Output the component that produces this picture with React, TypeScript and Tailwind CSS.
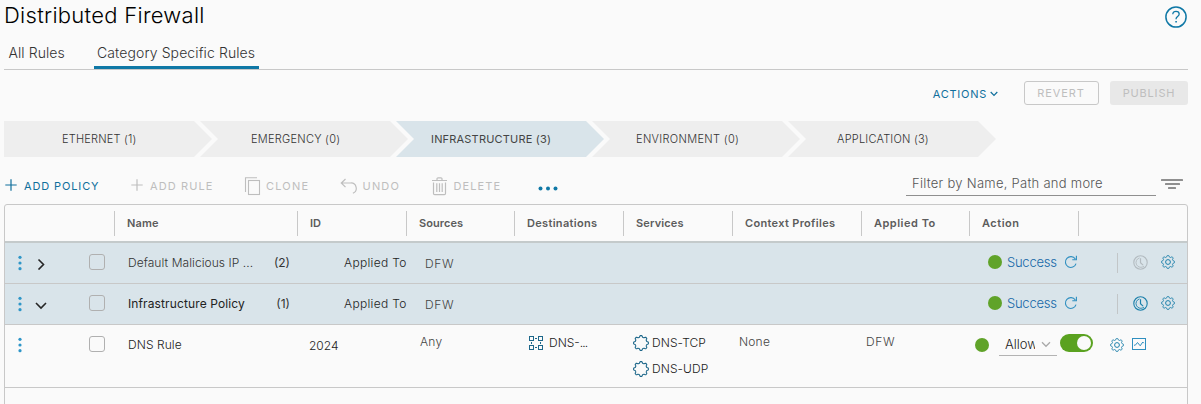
import type { ReactNode } from 'react';

const steps = [
  { label: 'ETHERNET (1)', spacing: 'tracking-[0.2px]', pad: 'pl-[58px]' },
  { label: 'EMERGENCY (0)', spacing: 'tracking-[0.26px]', pad: 'pl-[51px]' },
  { label: 'INFRASTRUCTURE (3)', spacing: 'tracking-[0.19px]', pad: 'pl-[35px]', active: true },
  { label: 'ENVIRONMENT (0)', spacing: 'tracking-[0.33px]', pad: 'pl-[44px]' },
  { label: 'APPLICATION (3)', spacing: 'tracking-[0.22px]', pad: 'pl-[49px]' },
];

const columns = [
  { label: 'Name', width: 'w-[183px]', spacing: 'tracking-[0.14px]' },
  { label: 'ID', width: 'w-[109px]', spacing: '' },
  { label: 'Sources', width: 'w-[108px]', spacing: 'tracking-[0.06px]' },
  { label: 'Destinations', width: 'w-[109px]', spacing: 'tracking-[0.32px]' },
  { label: 'Services', width: 'w-[109px]', spacing: 'tracking-[0.15px]' },
  { label: 'Context Profiles', width: 'w-[129px]', spacing: 'tracking-[0.32px]' },
  { label: 'Applied To', width: 'w-[108px]', spacing: 'tracking-[0.5px]' },
  { label: 'Action', width: 'w-[109px]', spacing: 'tracking-[0.5px]' },
  { label: '', width: 'w-[108px]', spacing: '' },
];

function cogPath(center: number, mid: number, amp: number) {
  const points: string[] = [];
  for (let i = 0; i < 128; i++) {
    const a = (i / 128) * Math.PI * 2;
    const r = mid + amp * Math.max(-1, Math.min(1, 1.8 * Math.cos(8 * a)));
    points.push(`${(center + r * Math.sin(a)).toFixed(2)} ${(center - r * Math.cos(a)).toFixed(2)}`);
  }
  return `M${points.join('L')}Z`;
}

const gearPath = cogPath(7, 5.85, 0.7);
const servicePath = cogPath(8, 6.65, 0.75);

function Plus() {
  return (
    <svg width="12" height="12" viewBox="0 0 12 12" stroke="currentColor" strokeWidth="1.2" className="mb-0.5">
      <path d="M6 .3v11.4M.3 6h11.4" />
    </svg>
  );
}

function CloneIcon() {
  return (
    <svg width="17" height="19" viewBox="0 0 17 19" fill="none" stroke="currentColor" strokeWidth="1.1">
      <rect x="4.5" y="3.5" width="11" height="14" />
      <path d="M1.5 15V.8H13" />
    </svg>
  );
}

function UndoIcon() {
  return (
    <svg width="17" height="17" viewBox="0 0 17 17" fill="none" stroke="currentColor" strokeWidth="1.2">
      <path d="M5.5 1 1.3 5l4.2 4.2M1.3 5h9.2a5.3 5.3 0 0 1 2.4 10.2" />
    </svg>
  );
}

function TrashIcon() {
  return (
    <svg width="17" height="19" viewBox="0 0 17 19" fill="none" stroke="currentColor" strokeWidth="1.2">
      <path d="M1 3.5h15M6 3V1.8A1 1 0 0 1 7 .8h3a1 1 0 0 1 1 1V3M2.5 5.5v11a1.2 1.2 0 0 0 1.2 1.2h9.6a1.2 1.2 0 0 0 1.2-1.2v-11M5.8 6.2V15M8.5 6.2V15M11.2 6.2V15" />
    </svg>
  );
}

function Kebab() {
  return (
    <svg width="4" height="16" viewBox="0 0 4 16" fill="#2f96c8">
      <circle cx="2" cy="2.3" r="1.6" />
      <circle cx="2" cy="8" r="1.6" />
      <circle cx="2" cy="13.7" r="1.6" />
    </svg>
  );
}

function Gear() {
  return (
    <svg width="14" height="14" viewBox="0 0 14 14" fill="none" stroke="#1c80ab" strokeWidth="1">
      <path strokeLinejoin="round" d={gearPath} />
      <circle cx="7" cy="7" r="2.4" />
    </svg>
  );
}

function Clock({ className }: { className: string }) {
  return (
    <svg width="15" height="15" viewBox="0 0 15 15" fill="none" stroke="currentColor" className={className}>
      <circle cx="7.5" cy="7.5" r="6.7" strokeWidth="1.1" />
      <path strokeWidth=".9" d="M6.5 2.900a4.800 4.800 0 1 0 4.500 8.200" />
      <path strokeWidth="1.2" d="M7.5 3.300v4.500l2.600 2.300" />
    </svg>
  );
}

function Refresh() {
  return (
    <svg width="14" height="14" viewBox="0 0 14 14" fill="none" stroke="#2f8fc0" strokeWidth="1.1">
      <path d="M12 8.6A5.4 5.4 0 1 1 11.3 4M12.4.8v3.9H8.3" />
    </svg>
  );
}

function ServiceIcon() {
  return (
    <svg width="16" height="16" viewBox="0 0 16 16" fill="none" stroke="#1d678a" strokeWidth="1.1">
      <path strokeLinejoin="round" d={servicePath} />
    </svg>
  );
}

function GroupIcon() {
  return (
    <svg width="14" height="14" viewBox="0 0 14 14" fill="none" stroke="#1d678a" strokeWidth="1">
      <rect x=".5" y=".5" width="4" height="4" />
      <rect x="9.5" y=".5" width="4" height="4" />
      <rect x=".5" y="9.5" width="4" height="4" />
      <rect x="9.5" y="9.5" width="4" height="4" />
      <path d="M6 2.500h2M6 11.500h2M2.500 6v2M11.500 6v2" />
    </svg>
  );
}

function Checkbox() {
  return <div className="size-4 rounded-[3px] border border-[#b0b0b0]" />;
}

function Tool({ icon, label, width, text, color = 'text-[#bebebe]' }: { icon: ReactNode; label: string; width: string; text: string; color?: string }) {
  return (
    <button className={`flex items-center ${width} ${color}`}>
      <span className="flex w-5 shrink-0 justify-start">{icon}</span>
      <span className={`whitespace-nowrap text-[11px] leading-4 ${text}`}>{label}</span>
    </button>
  );
}

function PolicyRow({ name, count, open = false, nameClass }: { name: string; count: string; open?: boolean; nameClass: string }) {
  return (
    <div className="flex h-[41px] items-center border-b border-[#c8c8c8] bg-[#d9e4ea] text-[12px] leading-4">
      <div className="flex w-[123px] items-center pl-[13px]">
        <Kebab />
        <svg width="12" height="12" viewBox="0 0 12 12" fill="none" stroke="#262626" strokeWidth="1.6" className="ml-[13px] mt-[1px]">
          <path d={open ? 'M1 4 6 9l5-5' : 'M3.500 1.500l5 5-5 5'} />
        </svg>
        <div className="mb-0.5 ml-[42px]"><Checkbox /></div>
      </div>
      <div className={`w-[131px] whitespace-nowrap ${nameClass}`}>{name}</div>
      <div className="w-[31px] text-right text-[#333]">{count}</div>
      <div className="ml-[54px] w-[81px] whitespace-nowrap font-light tracking-[0.32px] text-[#222]">Applied To</div>
      <div className="mt-0.5 w-[563px] font-light tracking-[0.7px] text-[#444]">DFW</div>
      <div className="mb-[2px] flex items-center">
        <span className="size-3.5 rounded-full bg-[#60a329]" />
        <span className="ml-[5px] w-[53px] text-[13px] font-light tracking-[-0.25px] text-[#1668a8]">Success</span>
        <span className="ml-[4px]"><Refresh /></span>
      </div>
      <div className="ml-[39px] h-5 w-px bg-[#c2c6c8]" />
      <div className="mb-[2px] ml-[15px] flex items-center">
        <Clock className={open ? 'text-[#1c80ab]' : 'text-[#b3bbc0]'} />
        <span className="ml-[13px]"><Gear /></span>
      </div>
    </div>
  );
}

export default function App() {
  return (
    <div className="h-[404px] w-full overflow-hidden bg-[#fafafa] pl-1 pr-[13px] font-['Inter',sans-serif]">
      <header className="flex h-[35px] items-start justify-between">
        <h1 className="pt-[1px] text-[22px] font-light leading-7 tracking-[0.28px] text-black">Distributed Firewall</h1>
        <svg width="22" height="22" viewBox="0 0 22 22" fill="none" stroke="#0f78a6" strokeWidth="1.500" className="mr-px mt-1.5">
          <circle cx="11" cy="11" r="10.100" />
          <path strokeWidth="1.300" d="M7.800 8.200c0-1.900 1.400-2.800 3.200-2.800s3.200 1 3.200 2.700c0 2.400-3.100 2.300-3.100 4.600v.5" />
          <path d="M10.300 15.800h1.600" />
        </svg>
      </header>

      <nav className="flex h-[35px] border-b border-[#c8c8c8] text-[14px] font-light leading-5 text-[#333]">
        <span className="w-[90px] pl-[4.500px] pt-2 tracking-[0.07px]">All Rules</span>
        <span className="h-[34px] w-[165px] whitespace-nowrap border-b-[3px] border-[#0f78a6] pl-[3px] pt-2 tracking-[0.1px]">Category Specific Rules</span>
      </nav>

      <div className="flex h-[51px] items-start justify-end pt-[11px] text-[11px]">
        <button className="mt-[5px] flex items-center leading-4 tracking-[0.75px] text-[#0f6f9c]">
          ACTIONS
          <svg width="8" height="6" viewBox="0 0 8 6" fill="none" stroke="currentColor" strokeWidth="1.200" className="ml-[3px]">
            <path d="m.7 1 3.300 3.300L7.300 1" />
          </svg>
        </button>
        <button className="ml-[26px] h-6 w-[75px] rounded-[3px] border border-[#c8c8c8] pr-px text-center tracking-[0.91px] text-[#bebebe]">REVERT</button>
        <button className="ml-[11px] h-6 w-[78px] rounded-[3px] bg-[#e8e8e8] text-center tracking-[0.81px] text-[#bebebe]">PUBLISH</button>
      </div>

      <div className="flex h-9">
        {steps.map((s) => (
          <div
            key={s.label}
            className={`mr-[-12px] flex h-9 w-[208px] shrink-0 items-center whitespace-nowrap text-[11px] [clip-path:polygon(0_0,190px_0,208px_18px,190px_36px,0_36px,18px_18px)] first:[clip-path:polygon(0_0,190px_0,208px_18px,190px_36px,0_36px)] ${s.pad} ${s.spacing} ${s.active ? 'bg-[#d9e4ea] text-[#444]' : 'bg-[#eeeeee] font-light text-[#333]'}`}
          >
            {s.label}
          </div>
        ))}
      </div>

      <div className="flex h-[47px] items-start">
        <div className="mt-[17px] flex h-6 w-[902px] shrink-0 items-center">
          <Tool icon={<span className="pl-px"><Plus /></span>} label="ADD POLICY" width="w-[126px]" text="tracking-[0.87px]" color="text-[#0f6f9c]" />
          <Tool icon={<span className="pl-px"><Plus /></span>} label="ADD RULE" width="w-[114px]" text="tracking-[1.1px]" />
          <Tool icon={<CloneIcon />} label="CLONE" width="w-[96px]" text="tracking-[1.2px] pl-[2px]" />
          <Tool icon={<UndoIcon />} label="UNDO" width="w-[91px]" text="tracking-[1.2px] pl-[2.500px]" />
          <Tool icon={<TrashIcon />} label="DELETE" width="w-[107px]" text="tracking-[1.1px] pl-[2.500px]" />
          <svg width="20" height="5" viewBox="0 0 20 5" fill="#0f78a6" className="mt-1">
            <circle cx="2.500" cy="2.500" r="2" />
            <circle cx="10" cy="2.500" r="2" />
            <circle cx="17.500" cy="2.500" r="2" />
          </svg>
        </div>
        <div className="mt-[15px] h-6 w-[250px] shrink-0 border-b border-[#8f8f8f] pl-[6px] text-[13px] font-light leading-[22px] tracking-[0.27px] text-[#555]">
          Filter by Name, Path and more
        </div>
        <svg width="22" height="11" viewBox="0 0 22 11" fill="#8f8f8f" className="ml-[5px] mt-[22px] shrink-0">
          <rect width="22" height="2" rx=".5" />
          <rect x="4" y="4" width="15" height="2" rx=".5" />
          <rect x="7" y="8" width="8" height="2" rx=".5" />
        </svg>
      </div>

      <section className="h-[210px] rounded-t-[3px] border border-[#c8c8c8]">
        <div className="flex h-[38px] border-b-2 border-[#c4cacb]">
          <div className="w-[109px] shrink-0" />
          {columns.map((c, i) => (
            <div key={i} className={`mt-[6px] h-[25px] shrink-0 whitespace-nowrap border-l border-[#c8c8c8] pl-[12px] text-[11px] font-semibold leading-[25px] text-[#5c5c5c] ${c.width} ${c.spacing}`}>
              {c.label}
            </div>
          ))}
        </div>
        <PolicyRow name="Default Malicious IP ..." count="(2)" nameClass="font-light tracking-[0.06px] text-[#333]" />
        <PolicyRow name="Infrastructure Policy" count="(1)" open nameClass="tracking-[0.12px] text-[#222]" />
        <div className="flex h-[63px] items-start border-b border-[#c8c8c8] text-[12px] font-light leading-4 text-[#222]">
          <div className="flex w-[123px] pl-[13px] pt-[11px]">
            <span className="pt-px"><Kebab /></span>
            <span className="ml-[67px]"><Checkbox /></span>
          </div>
          <div className="w-[181px] pt-3 tracking-[0.08px]">DNS Rule</div>
          <div className="w-[111px] pt-[13px]">2024</div>
          <div className="w-[109px] pt-[9px] tracking-[0.28px] text-[#444]">Any</div>
          <div className="flex w-[104px] items-center pt-[10px]">
            <GroupIcon />
            <span className="ml-[6px]">DNS-<span className="tracking-[-0.9px]">...</span></span>
          </div>
          <div className="flex w-[106px] flex-col gap-[10px] pt-[10px]">
            <div className="flex items-center"><ServiceIcon /><span className="ml-[3px] tracking-[0.08px]">DNS-TCP</span></div>
            <div className="flex items-center"><ServiceIcon /><span className="ml-[3px] tracking-[0.08px]">DNS-UDP</span></div>
          </div>
          <div className="w-[127px] pt-[9px] tracking-[0.200px] text-[#444]">None</div>
          <div className="w-[109px] pt-[9px] tracking-[0.700px] text-[#444]">DFW</div>
          <span className="mt-[13px] size-3.5 rounded-full bg-[#60a329]" />
          <div className="ml-[10px] mt-[9px] flex h-[22px] w-[58px] items-center border-b border-[#b3b3b3] pb-px pl-[6px]">
            <span className="w-[30px] overflow-hidden whitespace-nowrap text-[13px]">Allow</span>
            <svg width="10" height="7" viewBox="0 0 10 7" fill="none" stroke="#a9a9a9" strokeWidth="1.300" className="ml-[6px]">
              <path d="m1 1.300 4 4 4-4" />
            </svg>
          </div>
          <div className="ml-[3px] mt-[9px] flex h-[18px] w-[33px] items-center justify-end rounded-full bg-[#5aa220] pr-[2px]">
            <span className="size-3.5 rounded-full bg-[#fafafa]" />
          </div>
          <span className="ml-[17px] mt-[13px]"><Gear /></span>
          <svg width="14" height="12" viewBox="0 0 14 12" fill="none" stroke="#2f8fc0" strokeWidth="1" className="ml-[8px] mt-[13px]">
            <rect x=".5" y=".5" width="13" height="11" />
            <path d="M2 7.200h1.300L5.500 4.500l2.700 3.300 2.600-3.800 1 1.200" />
          </svg>
        </div>
      </section>
    </div>
  );
}
